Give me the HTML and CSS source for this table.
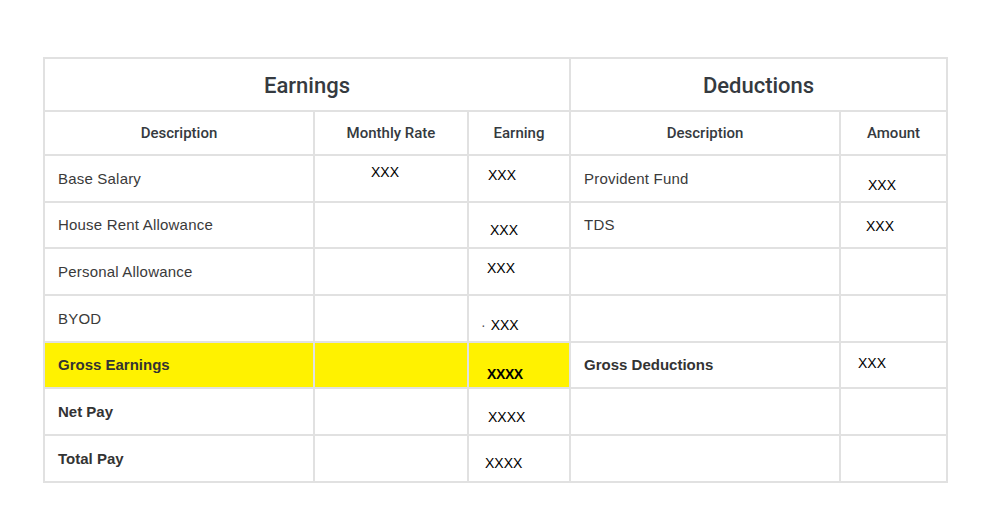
FILE: index.html
```html
<!DOCTYPE html>
<html lang="en">
<head>
<meta charset="utf-8">
<title>Payslip</title>
<link rel="stylesheet" href="styles.css">
</head>
<body>
<div class="page">
  <table class="slip">
    <colgroup>
      <col class="c-desc">
      <col class="c-rate">
      <col class="c-earn">
      <col class="c-ddesc">
      <col class="c-amt">
    </colgroup>
    <thead>
      <tr class="group-row">
        <th colspan="3" class="group">Earnings</th>
        <th colspan="2" class="group">Deductions</th>
      </tr>
      <tr class="head-row">
        <th class="head">Description</th>
        <th class="head">Monthly Rate</th>
        <th class="head">Earning</th>
        <th class="head">Description</th>
        <th class="head">Amount</th>
      </tr>
    </thead>
    <tbody>
      <tr class="r47">
        <td class="label">Base Salary</td>
        <td class="val rate-1">XXX</td>
        <td class="val earn-1">XXX</td>
        <td class="label">Provident Fund</td>
        <td class="val amt-1">XXX</td>
      </tr>
      <tr class="r46">
        <td class="label">House Rent Allowance</td>
        <td></td>
        <td class="val earn-2">XXX</td>
        <td class="label">TDS</td>
        <td class="val amt-2">XXX</td>
      </tr>
      <tr class="r47">
        <td class="label">Personal Allowance</td>
        <td></td>
        <td class="val earn-3">XXX</td>
        <td></td>
        <td></td>
      </tr>
      <tr class="r47">
        <td class="label">BYOD</td>
        <td></td>
        <td class="val earn-4"><span class="dot">·</span>XXX</td>
        <td></td>
        <td></td>
      </tr>
      <tr class="r46">
        <td class="label strong hl">Gross Earnings</td>
        <td class="hl"></td>
        <td class="val earn-5 hl strong-val">XXXX</td>
        <td class="label strong">Gross Deductions</td>
        <td class="val amt-5">XXX</td>
      </tr>
      <tr class="r47">
        <td class="label strong">Net Pay</td>
        <td></td>
        <td class="val earn-6">XXXX</td>
        <td></td>
        <td></td>
      </tr>
      <tr class="r47">
        <td class="label strong">Total Pay</td>
        <td></td>
        <td class="val earn-7">XXXX</td>
        <td></td>
        <td></td>
      </tr>
    </tbody>
  </table>
</div>
</body>
</html>
```

FILE: styles.css
```css
html, body {
  margin: 0;
  padding: 0;
  background: #ffffff;
}

.page {
  padding: 57px 0 0 43px;
}

.slip {
  border-collapse: collapse;
  table-layout: fixed;
  width: 905px;
  font-family: "Liberation Sans", Arial, sans-serif;
}

.c-desc { width: 270px; }
.c-rate { width: 154px; }
.c-earn { width: 102px; }
.c-ddesc { width: 270px; }
.c-amt { width: 107px; }

.slip th,
.slip td {
  border: 2px solid #e1e1e1;
  padding: 0;
  box-sizing: border-box;
}

.slip .group-row th {
  height: 53px;
}

.slip .head-row th {
  height: 44px;
}

.slip .r47 td {
  height: 47px;
}

.slip .r46 td {
  height: 46px;
}

.slip .group {
  font-family: Roboto, "Noto Sans", sans-serif;
  font-weight: 500;
  font-size: 22px;
  color: #353a40;
  text-align: center;
  padding-top: 2px;
}

.slip .head {
  font-family: Roboto, "Noto Sans", sans-serif;
  font-weight: 500;
  font-size: 15px;
  color: #353a40;
  text-align: center;
}

.slip .label {
  font-size: 15px;
  letter-spacing: 0.2px;
  color: #3a3a3a;
  padding-left: 13px;
  padding-bottom: 1px;
}

.slip .strong {
  font-weight: 700;
  letter-spacing: 0;
  color: #333333;
}

.slip .hl {
  background: #fff200;
}

.slip .val {
  font-size: 14px;
  color: #000000;
  vertical-align: top;
  line-height: 16px;
}

.slip .strong-val {
  font-weight: 700;
  letter-spacing: -0.4px;
}

.dot {
  color: #555;
  margin-right: 5px;
}

.slip .rate-1 { padding: 8px 0 0 56px; }
.slip .earn-1 { padding: 11px 0 0 19px; }
.slip .amt-1 { padding: 21px 0 0 27px; }
.slip .earn-2 { padding: 19px 0 0 21px; }
.slip .amt-2 { padding: 15px 0 0 25px; }
.slip .earn-3 { padding: 11px 0 0 18px; }
.slip .earn-4 { padding: 21px 0 0 12px; }
.slip .earn-5 { padding: 23px 0 0 18px; }
.slip .amt-5 { padding: 12px 0 0 17px; }
.slip .earn-6 { padding: 20px 0 0 19px; }
.slip .earn-7 { padding: 19px 0 0 16px; }
```
